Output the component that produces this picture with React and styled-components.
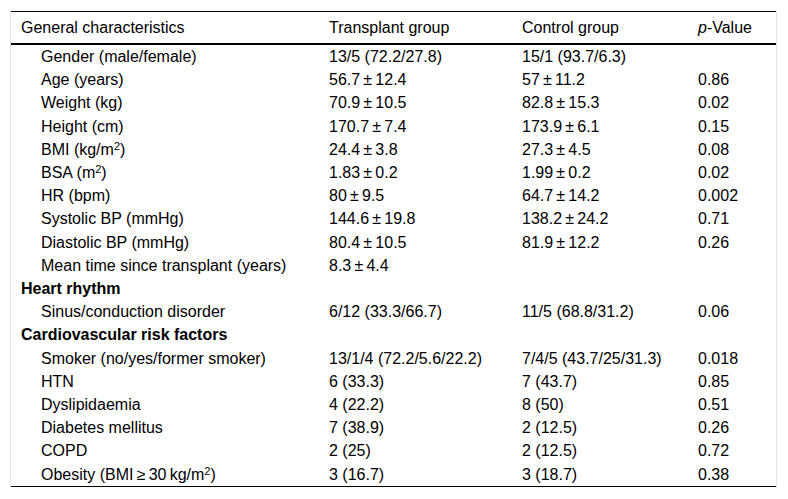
import styled, { createGlobalStyle } from 'styled-components';

const Global = createGlobalStyle`
  body {
    margin: 0;
    background: #fff;
    font-family: 'Liberation Sans', Arial, sans-serif;
    color: #000;
  }
`;

const Frame = styled.div`
  margin: 11px 0 0 10px;
  width: 767px;
  border-left: 1px solid #e4e4e4;
  border-right: 1px solid #e4e4e4;
  box-sizing: border-box;
`;

const Table = styled.table`
  width: 100%;
  border-collapse: collapse;
  table-layout: fixed;
  font-size: 16px;
  border-top: 1px solid #000;
  border-bottom: 1px solid #000;
`;

const Head = styled.th`
  text-align: left;
  font-weight: normal;
  padding: 0 0 0 10px;
  height: 31px;
  line-height: 31px;
  border-bottom: 2px solid #000;
  white-space: nowrap;
`;

const Cell = styled.td`
  padding: 0 0 0 ${p => (p.$indent ? 30 : 10)}px;
  height: 23.2px;
  line-height: 23.2px;
  white-space: nowrap;
  font-weight: ${p => (p.$bold ? 'bold' : 'normal')};
`;

const Sup = styled.sup`
  font-size: 11px;
  line-height: 0;
  vertical-align: 5px;
`;

const pm = '\u2009±\u2009';
const m2 = (before, after = '') => (
  <>
    {before}m<Sup>2</Sup>{after}
  </>
);

const rows = [
  ['Gender (male/female)', '13/5 (72.2/27.8)', '15/1 (93.7/6.3)', ''],
  ['Age (years)', `56.7${pm}12.4`, `57${pm}11.2`, '0.86'],
  ['Weight (kg)', `70.9${pm}10.5`, `82.8${pm}15.3`, '0.02'],
  ['Height (cm)', `170.7${pm}7.4`, `173.9${pm}6.1`, '0.15'],
  [m2('BMI (kg/', ')'), `24.4${pm}3.8`, `27.3${pm}4.5`, '0.08'],
  [m2('BSA (', ')'), `1.83${pm}0.2`, `1.99${pm}0.2`, '0.02'],
  ['HR (bpm)', `80${pm}9.5`, `64.7${pm}14.2`, '0.002'],
  ['Systolic BP (mmHg)', `144.6${pm}19.8`, `138.2${pm}24.2`, '0.71'],
  ['Diastolic BP (mmHg)', `80.4${pm}10.5`, `81.9${pm}12.2`, '0.26'],
  ['Mean time since transplant (years)', `8.3${pm}4.4`, '', ''],
  { section: 'Heart rhythm' },
  ['Sinus/conduction disorder', '6/12 (33.3/66.7)', '11/5 (68.8/31.2)', '0.06'],
  { section: 'Cardiovascular risk factors' },
  ['Smoker (no/yes/former smoker)', '13/1/4 (72.2/5.6/22.2)', '7/4/5 (43.7/25/31.3)', '0.018'],
  ['HTN', '6 (33.3)', '7 (43.7)', '0.85'],
  ['Dyslipidaemia', '4 (22.2)', '8 (50)', '0.51'],
  ['Diabetes mellitus', '7 (38.9)', '2 (12.5)', '0.26'],
  ['COPD', '2 (25)', '2 (12.5)', '0.72'],
  [m2('Obesity (BMI\u2009≥\u200930\u2009kg/', ')'), '3 (16.7)', '3 (18.7)', '0.38'],
];

export default function App() {
  return (
    <>
      <Global />
      <Frame>
        <Table>
          <colgroup>
            <col style={{ width: 308 }} />
            <col style={{ width: 193 }} />
            <col style={{ width: 176 }} />
            <col />
          </colgroup>
          <thead>
            <tr>
              <Head>General characteristics</Head>
              <Head>Transplant group</Head>
              <Head>Control group</Head>
              <Head>
                <i>p</i>-Value
              </Head>
            </tr>
          </thead>
          <tbody>
            {rows.map((r, i) =>
              r.section ? (
                <tr key={i}>
                  <Cell $bold>{r.section}</Cell>
                  <Cell />
                  <Cell />
                  <Cell />
                </tr>
              ) : (
                <tr key={i}>
                  <Cell $indent>{r[0]}</Cell>
                  <Cell>{r[1]}</Cell>
                  <Cell>{r[2]}</Cell>
                  <Cell>{r[3]}</Cell>
                </tr>
              )
            )}
          </tbody>
        </Table>
      </Frame>
    </>
  );
}
